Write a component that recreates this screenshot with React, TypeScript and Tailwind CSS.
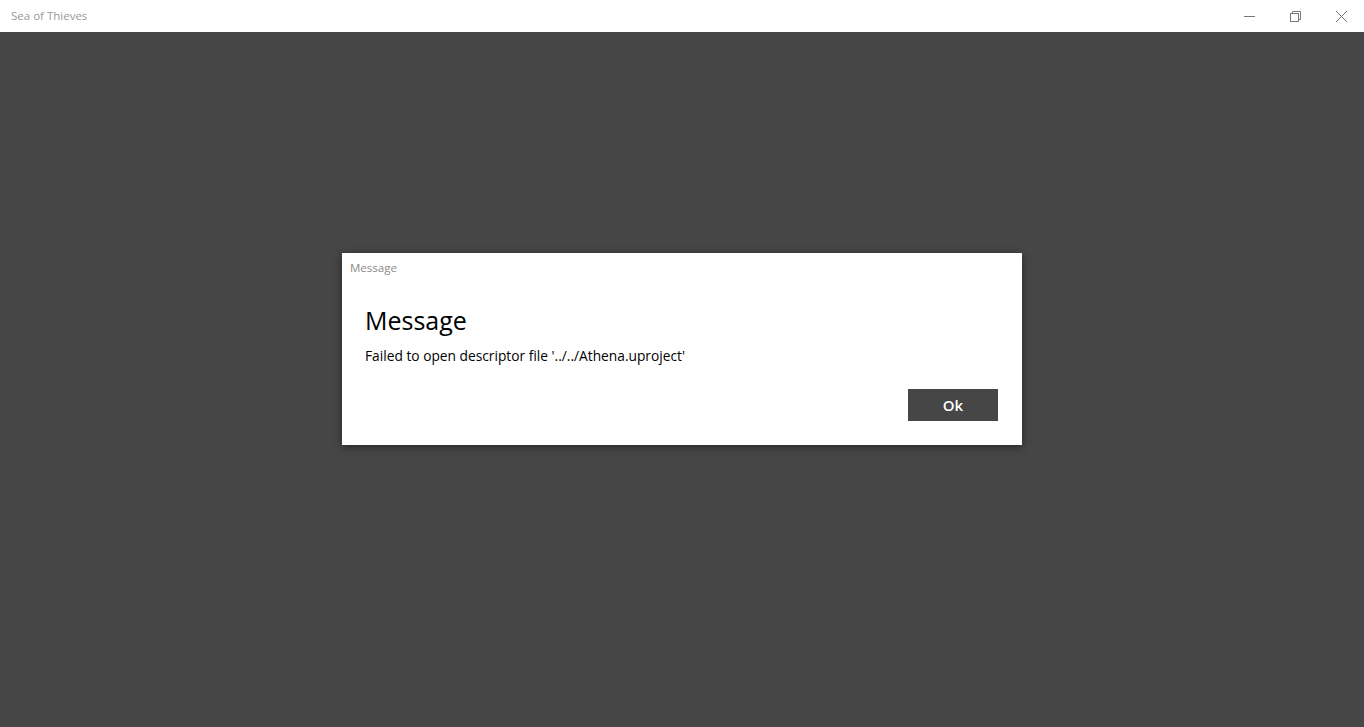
import React from "react";

const font = { fontFamily: '"Open Sans", "Noto Sans", sans-serif' };

const TitleBar = () => (
  <div className="h-[32px] bg-white flex items-center justify-between shrink-0">
    <span className="pl-[11px] text-[11.5px] text-[#999999]">Sea of Thieves</span>
    <div className="flex h-full">
      <button className="w-[46px] h-full flex items-center justify-center">
        <svg width="11" height="11" viewBox="0 0 11 11">
          <line x1="0" y1="5.5" x2="11" y2="5.5" stroke="#777" strokeWidth="1" />
        </svg>
      </button>
      <button className="w-[46px] h-full flex items-center justify-center">
        <svg width="11" height="11" viewBox="0 0 11 11" fill="none" stroke="#777" strokeWidth="1">
          <rect x="0.5" y="2.5" width="8" height="8" />
          <path d="M2.5 2.5 V0.5 H10.5 V8.5 H8.5" />
        </svg>
      </button>
      <button className="w-[46px] h-full flex items-center justify-center">
        <svg width="11" height="11" viewBox="0 0 11 11" stroke="#777" strokeWidth="1">
          <line x1="0" y1="0" x2="11" y2="11" />
          <line x1="11" y1="0" x2="0" y2="11" />
        </svg>
      </button>
    </div>
  </div>
);

export default function App() {
  return (
    <div className="h-screen flex flex-col overflow-hidden" style={font}>
      <TitleBar />
      <div className="flex-1 bg-[#464646] flex justify-center pt-[221px]">
        <div className="w-[680px] h-[192px] bg-white shadow-[0_2px_8px_rgba(0,0,0,0.45)] flex flex-col">
          <div className="pl-[8px] pt-[7px] text-[11.5px] text-[#8a8a8a] leading-[16px]">Message</div>
          <div className="px-[23px] pt-[27px]">
            <h1 className="text-[25px] leading-[34px] text-black">Message</h1>
            <p className="text-[13.75px] leading-[20px] text-black mt-[9px]">
              Failed to open descriptor file '../../Athena.uproject'
            </p>
          </div>
          <div className="flex justify-end pr-[24px] mt-[23px]">
            <button className="w-[90px] h-[32px] bg-[#464646] text-white text-[15px] font-semibold">
              Ok
            </button>
          </div>
        </div>
      </div>
    </div>
  );
}
